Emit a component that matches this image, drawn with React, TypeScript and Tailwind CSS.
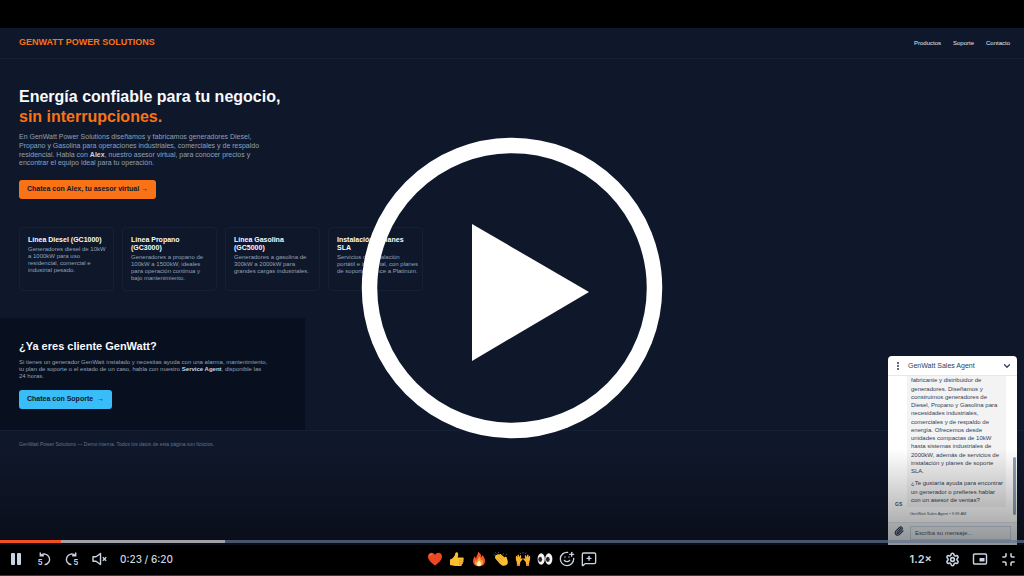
import type { ReactNode } from "react";
import {
  ChevronDown,
  EllipsisVertical,
  MessageSquarePlus,
  Minimize,
  Paperclip,
  Settings,
  SmilePlus,
} from "lucide-react";

const navLinks = ["Productos", "Soporte", "Contacto"];

const products = [
  {
    title: "Línea Diesel (GC1000)",
    text: "Generadores diesel de 10kW\na 1000kW para uso\nresidencial, comercial e\nindustrial pesado.",
  },
  {
    title: "Línea Propano (GC3000)",
    text: "Generadores a propano de\n100kW a 1500kW, ideales\npara operación continua y\nbajo mantenimiento.",
  },
  {
    title: "Línea Gasolina (GC5000)",
    text: "Generadores a gasolina de\n300kW a 2000kW para\ngrandes cargas industriales.",
  },
  {
    title: "Instalación y planes SLA",
    text: "Servicios de instalación\nportátil e industrial, con planes\nde soporte Bronce a Platinum.",
  },
];

function IconButton({ label, children }: { label: string; children: ReactNode }) {
  return (
    <button
      type="button"
      aria-label={label}
      className="flex size-4 items-center justify-center"
    >
      {children}
    </button>
  );
}

function SkipIcon({ forward = false }: { forward?: boolean }) {
  return (
    <svg viewBox="0 0 16 16" className="size-4" fill="none" stroke="currentColor" strokeWidth="1.4">
      <g transform={forward ? "translate(16 0) scale(-1 1)" : undefined}>
        <path d="M4.600 4.500A5.300 5.300 0 1 1 8.600 13.600" />
        <path d="M4.300 1.500v3.300h3.500" />
      </g>
      <text
        x={forward ? 9.5 : 1.8}
        y="14.3"
        fill="currentColor"
        stroke="none"
        fontSize="7.500"
        fontWeight="700"
        fontFamily="Inter, sans-serif"
      >
        5
      </text>
    </svg>
  );
}

function HeartIcon() {
  return (
    <svg viewBox="0 0 16 16" className="size-4">
      <path
        d="M8 14.6C4 11.6 1 8.8 1 5.500 1 3.300 2.600 1.800 4.500 1.800c1.500 0 2.800.8 3.500 2.200.7-1.400 2-2.200 3.500-2.200 1.900 0 3.500 1.500 3.500 3.700 0 3.300-3 6.100-7 9.100z"
        fill="#ee4823"
      />
      <path d="M3 4.600c.3-.8 1-1.200 1.700-1.200" stroke="#ff8f70" fill="none" strokeLinecap="round" />
    </svg>
  );
}

function ThumbIcon() {
  return (
    <svg viewBox="0 0 16 16" className="size-4">
      <path
        d="M1 8.500c1.800-.4 3.500-2 4.600-3.800C6.300 3.500 6 1.500 7.300 1.200c1.700-.3 2.100 1.700 1.800 3.200l-.4 2h4.700c1.700 0 1.900 2 .7 2.500 1 .7.7 2.100-.4 2.400.6.900.1 1.900-.9 2.100.2.900-.4 1.500-1.400 1.500H6.200c-2 0-3.200-.8-5.200-.8z"
        fill="#fbbf30"
      />
      <path d="M10 9h3.500M10 11.300h3.200M10 13.300h2.500" stroke="#d98a1c" strokeWidth=".7" />
    </svg>
  );
}

function FireIcon() {
  return (
    <svg viewBox="0 0 16 16" className="size-4">
      <path
        d="M7 .8c2.700 1.500 3.300 3.500 3.300 5.400.7-.5 1-1.200 1-2.100 2 1.900 2.700 4 2.700 6 0 3.300-2.600 5.300-6 5.300s-6-2-6-5.300c0-2.300 1-3.900 2-5.100 0 1.200.4 2 1.100 2.400C5.300 4.800 7.200 3.500 7 .8z"
        fill="#f2562a"
      />
      <path
        d="M8 5.500c2 1.800 1.500 3 2.200 4.100.5-.4.700-.8.8-1.400 2.400 4-.1 6.800-3 6.800-3.300 0-4.900-2.800-3.300-5.800.4.800.8 1.200 1.500 1.300C6 8.500 8 7.500 8 5.500z"
        fill="#fba52c"
      />
      <path d="M8 9.500c1.500 1.500 2.200 2.400 2.200 3.600 0 1.300-1 1.900-2.200 1.900s-2.200-.7-2.200-1.900c0-1.200 1.200-2.100 2.200-3.600z" fill="#fff2c4" />
    </svg>
  );
}

function ClapIcon() {
  return (
    <svg viewBox="0 0 16 16" className="size-4">
      <path
        d="M2.300 5.600c-.5-1.300.9-2 1.800-1.200C4 3.200 5.400 3 6.100 3.700c.3-.8 1.300-.9 2-.3l3.600 3.100c.1-1 1.500-1.200 1.900-.2l1.100 3.800c.7 2.900-1.300 4.800-3.800 4.700-1.800-.1-3.200-1.200-4.300-2.400L3.200 8.600c-.9-1-1.700-2.100-.9-3z"
        fill="#fbbf30"
      />
      <path d="m5 5 4.500 4.500M3.500 6.600l4.600 4.800M7 4.300l3.800 3.800" stroke="#dc8d20" strokeWidth=".6" />
      <path d="M.6 3.400 2 3.900M2.400 1.200l1 1.500M5.600.8 5.400 2.400M10.600 2.200 9.800 3.600M14 3l-1.400 1.200" stroke="#475569" />
    </svg>
  );
}

function RaisedHandsIcon() {
  return (
    <svg viewBox="0 0 16 16" className="size-4">
      <g fill="#fbb32e">
        <path d="M.8 6c0-1 1-1.200 1.300-.4l.3 1.200.1-2.500c.1-1 1.200-1 1.400 0l.3 2 .7-1.500c.5-.9 1.500-.4 1.300.5l-.5 2.600 1-.6c.8-.4 1.300.5.8 1.200L5.300 11l-.5 4H2l-.2-4C1 9.800.8 8 .8 6z" />
        <path d="M15.200 6c0-1-1-1.200-1.300-.4l-.3 1.200-.1-2.500c-.1-1-1.200-1-1.400 0l-.3 2-.7-1.500c-.5-.9-1.500-.4-1.300.5l.5 2.600-1-.6c-.8-.4-1.300.5-.8 1.200l2.200 2.500.5 4H14l.2-4c.8-1.200 1-3 1-5z" />
      </g>
      <path d="M1.900 13.300h3V15h-3zM11.100 13.300h3V15h-3z" fill="#f2762a" />
      <path d="M5 1.600 5.600 3M8 1v1.600M11 1.600 10.400 3" stroke="#64748b" strokeWidth=".8" />
    </svg>
  );
}

function EyesIcon() {
  return (
    <svg viewBox="0 0 16 16" className="size-4">
      <ellipse cx="4.200" cy="8" rx="3.600" ry="5.700" fill="#f4f4f5" />
      <ellipse cx="11.800" cy="8" rx="3.600" ry="5.700" fill="#f4f4f5" />
      <ellipse cx="3.200" cy="8.300" rx="1.900" ry="2.600" fill="#26262c" />
      <ellipse cx="10.800" cy="8.300" rx="1.900" ry="2.600" fill="#26262c" />
    </svg>
  );
}

function LandingPage() {
  return (
    <div className="text-slate-400">
      <header className="flex h-[31px] items-center justify-between border-b border-slate-800/50 pr-[14px] pl-[19px]">
        <span className="text-[9px] font-bold text-[#f97316]">GENWATT POWER SOLUTIONS</span>
        <nav className="flex gap-3 text-[6px] text-slate-200">
          {navLinks.map((link) => (
            <a key={link} href="#">
              {link}
            </a>
          ))}
        </nav>
      </header>

      <section className="max-w-[304px] pt-7 pl-[19px]">
        <h1 className="text-base leading-5 font-bold text-slate-50">
          Energía confiable para tu negocio, <span className="block text-[#f97316]">sin interrupciones.</span>
        </h1>
        <p className="mt-[6px] max-w-[252px] text-[7px] leading-tight">
          En GenWatt Power Solutions diseñamos y fabricamos generadores Diesel, Propano y Gasolina para
          operaciones industriales, comerciales y de respaldo residencial. Habla con{" "}
          <strong className="text-slate-300">Alex</strong>, nuestro asesor virtual, para conocer precios y
          encontrar el equipo ideal para tu operación.
        </p>
        <button
          type="button"
          className="mt-3 h-[19px] rounded-[3px] bg-[#f97316] px-2 text-[7px] font-bold text-slate-900"
        >
          Chatea con Alex, tu asesor virtual →
        </button>
      </section>

      <section className="mt-7 grid max-w-[423px] grid-cols-4 gap-2 pl-[19px]">
        {products.map((product) => (
          <article key={product.title} className="min-h-16 rounded-[4px] border border-slate-800/50 py-2 pl-2">
            <h2 className="pr-2 text-[7px] leading-[8px] font-bold text-slate-50">{product.title}</h2>
            <p className="mt-[2px] text-[6px] leading-[7px] whitespace-pre-line">{product.text}</p>
          </article>
        ))}
      </section>

      <section className="mt-[27px] max-w-[305px] bg-[#080f1e] pt-5 pb-[21px] pl-[19px]">
        <h2 className="text-[11px] leading-4 font-bold text-slate-50">¿Ya eres cliente GenWatt?</h2>
        <p className="mt-[5px] max-w-[252px] text-[6px] leading-[7px]">
          Si tienes un generador GenWatt instalado y necesitas ayuda con una alarma, mantenimiento, tu plan de
          soporte o el estado de un caso, habla con nuestro{" "}
          <strong className="text-slate-300">Service Agent</strong>, disponible las 24&nbsp;horas.
        </p>
        <button
          type="button"
          className="mt-[10px] h-[19px] rounded-[3px] bg-[#38bdf8] px-2 text-[7px] font-bold text-slate-900"
        >
          Chatea con Soporte &nbsp;→
        </button>
      </section>

      <footer className="border-t border-slate-800/50 pt-[9px] pl-[19px] text-[5px] leading-[8px] text-slate-500">
        GenWatt Power Solutions — Demo interna. Todos los datos de esta página son ficticios.
      </footer>
    </div>
  );
}

function ChatWidget() {
  return (
    <aside className="absolute right-[7px] bottom-0 w-[129px] overflow-hidden rounded-t-[4px] bg-white text-slate-700">
      <header className="flex h-5 items-center border-b border-slate-200 px-[5px]">
        <button type="button" aria-label="Menú">
          <EllipsisVertical className="size-[10px]" strokeWidth={3} />
        </button>
        <h2 className="ml-[5px] flex-1 text-[7px]">GenWatt Sales Agent</h2>
        <button type="button" aria-label="Minimizar chat">
          <ChevronDown className="size-[10px]" strokeWidth={3} />
        </button>
      </header>

      <div className="relative flex items-end pr-[11px] pl-[7px]">
        <span className="w-3 text-[5px] leading-none font-bold text-slate-600">GS</span>
        <div className="flex-1 bg-[#f3f3f3] pb-[3px] pl-1 text-[6px] leading-snug">
          <p>
            fabricante y distribuidor de generadores. Diseñamos y construimos generadores de Diesel, Propano y
            Gasolina para necesidades industriales, comerciales y de respaldo de energía. Ofrecemos desde
            unidades compactas de 10kW hasta sistemas industriales de 2000kW, además de servicios de
            instalación y planes de soporte SLA.
          </p>
          <p className="mt-1">
            ¿Te gustaría ayuda para encontrar un generador o prefieres hablar con un asesor de ventas?
          </p>
        </div>
        <div className="absolute right-[1px] -bottom-2 h-[58px] w-[3px] rounded-full bg-slate-400" />
      </div>
      <p className="mt-[3px] pl-[22px] text-[4px] leading-[8px] text-slate-600">GenWatt Sales Agent • 9:39 AM</p>

      <form className="mt-1 flex h-[23px] items-start gap-[6px] border-t border-slate-200 bg-slate-100 px-[6px] pt-[3px]">
        <button type="button" aria-label="Adjuntar archivo">
          <Paperclip className="size-[10px]" strokeWidth={3} />
        </button>
        <input
          aria-label="Mensaje"
          placeholder="Escriba su mensaje..."
          className="h-[14px] w-full min-w-0 border border-slate-300 px-1 text-[6px] placeholder:text-slate-600"
        />
      </form>
    </aside>
  );
}

function PlayerControls() {
  return (
    <footer className="relative grid h-[31px] grid-cols-[1fr_auto_1fr] items-center border-b border-indigo-900 bg-black px-2 pb-[2px] text-slate-300">
      <div className="absolute inset-x-0 -top-[5px] flex h-[3px] bg-slate-500/70">
        <div className="w-[6%] bg-[#f04e23]" />
        <div className="w-[16%] bg-[#a1a1aa]" />
      </div>

      <div className="flex items-center gap-3">
        <IconButton label="Pausar">
          <svg viewBox="0 0 16 16" className="size-4" fill="currentColor">
            <rect x="3" y="2" width="4" height="12" rx="1" />
            <rect x="9" y="2" width="4" height="12" rx="1" />
          </svg>
        </IconButton>
        <IconButton label="Retroceder 5 segundos">
          <SkipIcon />
        </IconButton>
        <IconButton label="Avanzar 5 segundos">
          <SkipIcon forward />
        </IconButton>
        <IconButton label="Activar sonido">
          <svg viewBox="0 0 16 16" className="size-4" fill="none" stroke="currentColor" strokeWidth="1.4">
            <path d="M1 5.800h3L8.500 2.500v11L4 10.200H1z" strokeLinejoin="round" />
            <path d="m10.800 6.300 3.400 3.400m0-3.400-3.400 3.400" />
          </svg>
        </IconButton>
        <span className="text-[10px] font-medium">0:23 / 6:20</span>
      </div>

      <div className="flex items-center gap-[6px]">
        <IconButton label="Corazón"><HeartIcon /></IconButton>
        <IconButton label="Me gusta"><ThumbIcon /></IconButton>
        <IconButton label="Fuego"><FireIcon /></IconButton>
        <IconButton label="Aplauso"><ClapIcon /></IconButton>
        <IconButton label="Manos arriba"><RaisedHandsIcon /></IconButton>
        <IconButton label="Ojos"><EyesIcon /></IconButton>
        <IconButton label="Más reacciones"><SmilePlus className="size-4" /></IconButton>
        <IconButton label="Comentar"><MessageSquarePlus className="size-4" /></IconButton>
      </div>

      <div className="flex items-center justify-end gap-3">
        <button type="button" className="text-[11px] font-semibold">1.2×</button>
        <IconButton label="Configuración"><Settings className="size-[15px]" strokeWidth={2.5} /></IconButton>
        <IconButton label="Imagen en imagen">
          <svg viewBox="0 0 16 16" className="size-4" fill="none" stroke="currentColor" strokeWidth="1.4">
            <rect x="1.500" y="3" width="13" height="10" rx="1" />
            <rect x="7.500" y="7" width="5" height="3.500" fill="currentColor" stroke="none" />
          </svg>
        </IconButton>
        <IconButton label="Salir de pantalla completa">
          <Minimize className="size-[15px]" strokeWidth={2.5} />
        </IconButton>
      </div>
    </footer>
  );
}

function App() {
  return (
    <main className="relative flex min-h-screen flex-col overflow-hidden bg-black pt-7 font-['Liberation_Sans',sans-serif]">
      <div className="relative flex-1 bg-[#0f172a]">
        <LandingPage />
        <ChatWidget />
        <div className="pointer-events-none absolute inset-x-0 bottom-0 h-24 bg-linear-to-t from-black/40 to-transparent" />
      </div>

      <div className="font-[Inter,sans-serif]">
        <PlayerControls />
      </div>

      <button
        type="button"
        aria-label="Reproducir"
        className="absolute top-1/2 left-1/2 size-[302px] -translate-1/2"
      >
        <svg viewBox="0 0 302 302" className="size-full">
          <circle cx="151" cy="151" r="142.500" fill="none" stroke="#fff" strokeWidth="15.500" />
          <path d="M111 87v137l117-69z" fill="#fff" />
        </svg>
      </button>
    </main>
  );
}

export default App;
